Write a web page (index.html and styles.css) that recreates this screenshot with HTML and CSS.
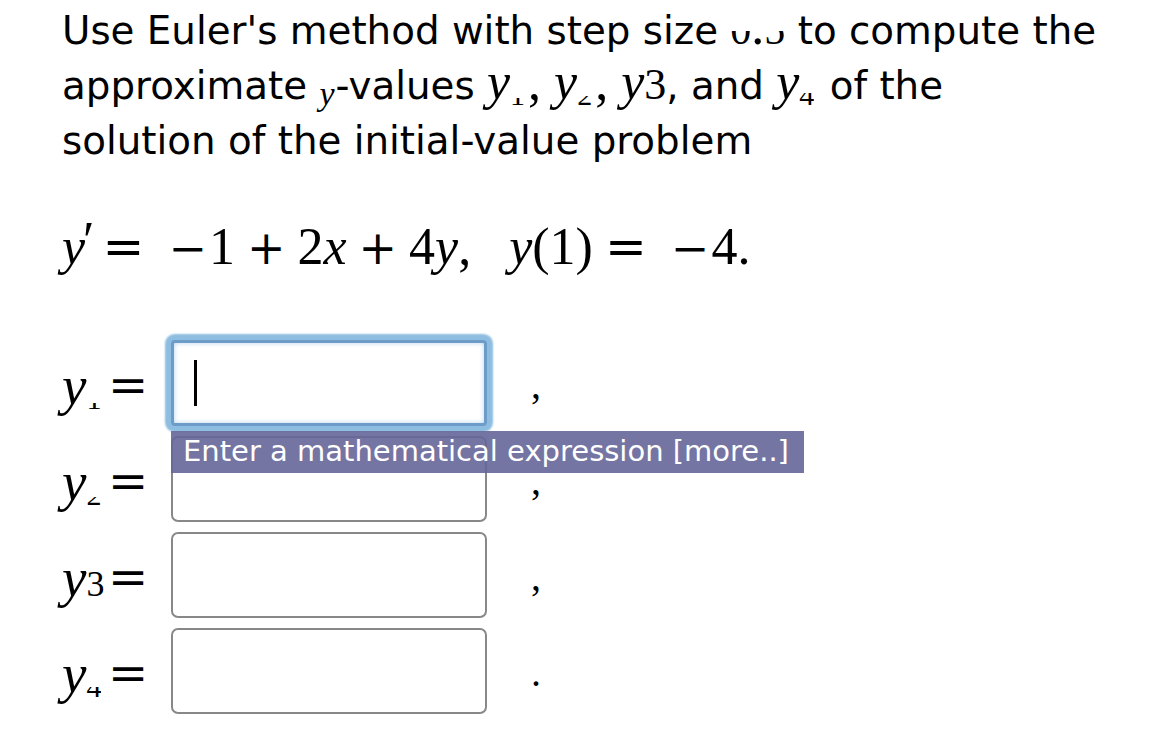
FILE: index.html
```html
<!DOCTYPE html>
<html>
<head>
<meta charset="utf-8">
<link rel="stylesheet" href="styles.css">
</head>
<body>
<div class="page">
  <p class="prompt"><span class="line">Use Euler's method with step size <span class="m"><span class="clip c-big"><span class="cin">0</span></span>.<span class="clip c-big"><span class="cin">5</span></span></span> to compute the</span><span class="line">approximate <i class="m yv">y</i>-values <span class="m"><i>y</i><span class="clip c-sub1"><span class="cin">1</span></span>, <i>y</i><span class="clip c-sub2"><span class="cin">2</span></span>, <i>y</i><span class="t3">3</span></span>, and <span class="m"><i>y</i><span class="clip c-sub4"><span class="cin">4</span></span></span> of the</span><span class="line">solution of the initial-value problem</span></p>

  <div class="eq"><i>y</i><span class="prime">′</span><span class="op eqop">=</span><span class="op un">−</span>1<span class="op">+</span>2<i>x</i><span class="op">+</span>4<i>y</i>,<span class="gap"></span><i>y</i>(1)<span class="op eqop">=</span><span class="op un">−</span>4.</div>

  <div class="answers">
    <div class="row">
      <span class="lbl"><i>y</i><span class="clip s1"><span class="cin">1</span></span></span>
      <span class="eqsign">=</span>
      <div class="box focus"><span class="caret"></span></div>
      <span class="punct">,</span>
      <div class="tip">Enter a mathematical expression [more..]</div>
    </div>
    <div class="row">
      <span class="lbl"><i>y</i><span class="clip s2"><span class="cin">2</span></span></span>
      <span class="eqsign">=</span>
      <div class="box"></div>
      <span class="punct">,</span>
    </div>
    <div class="row">
      <span class="lbl"><i>y</i><span class="three">3</span></span>
      <span class="eqsign">=</span>
      <div class="box"></div>
      <span class="punct">,</span>
    </div>
    <div class="row">
      <span class="lbl"><i>y</i><span class="clip s4"><span class="cin">4</span></span></span>
      <span class="eqsign">=</span>
      <div class="box"></div>
      <span class="punct dot">.</span>
    </div>
  </div>
</div>
</body>
</html>
```

FILE: styles.css
```css
html, body {
  margin: 0;
  padding: 0;
  background: #ffffff;
}

.page {
  position: relative;
  padding: 0 0 0 62px;
  color: #000;
}

.prompt {
  margin: 0;
  padding-top: 3px;
  font-family: "DejaVu Sans", sans-serif;
  font-size: 38.8px;
  line-height: 55px;
  white-space: nowrap;
}

.line {
  display: block;
}

.m {
  font-family: "Liberation Serif", serif;
  font-size: 52px;
  line-height: 10px;
}

.m i, .eq i, .lbl i {
  font-style: italic;
}

.t3 {
  font-size: 44px;
}

.yv {
  font-size: 34px;
  position: relative;
  top: 6px;
  margin-right: 1px;
}

.clip {
  display: inline-block;
  overflow: hidden;
  vertical-align: baseline;
  line-height: 1em;
}

.cin {
  display: block;
  line-height: 1em;
}

.c-big {
  height: 0.32em;
  font-size: 42px;
}
.c-big .cin {
  margin-top: calc(0.32em - 0.8375em);
}

.c-sub1, .c-sub2, .c-sub4 {
  font-size: 30px;
  vertical-align: -6px;
  margin-right: 3px;
}
.c-sub1 { height: 0.25em; }
.c-sub1 .cin { margin-top: calc(0.25em - 0.8375em); }
.c-sub2 { height: 0.3em; }
.c-sub2 .cin { margin-top: calc(0.3em - 0.8375em); }
.c-sub4 { height: 0.4em; }
.c-sub4 .cin { margin-top: calc(0.4em - 0.8375em); }

.eq {
  margin-top: 49px;
  font-family: "Liberation Serif", serif;
  font-size: 52px;
  line-height: 60px;
  white-space: nowrap;
}

.prime {
  font-style: normal;
  margin-left: -2px;
  margin-right: -4px;
  position: relative;
  top: -6px;
}

.op {
  font-family: "DejaVu Serif", serif;
  font-size: 46px;
  margin: 0 12px;
}

.op.eqop {
  font-size: 50px;
}

.op.un {
  margin-right: 2px;
}

.gap {
  display: inline-block;
  width: 38px;
}

.answers {
  margin-top: 62px;
  display: flex;
  flex-direction: column;
  gap: 10px;
}

.row {
  position: relative;
  display: flex;
  align-items: center;
  height: 86px;
  font-family: "Liberation Serif", serif;
  font-size: 55px;
}

.lbl {
  width: 46px;
  white-space: nowrap;
  position: relative;
  top: 2px;
}

.three {
  font-size: 36px;
}

.s1, .s2, .s4 {
  font-size: 30px;
  vertical-align: -6px;
}
.s1 { height: 0.22em; }
.s1 .cin { margin-top: calc(0.22em - 0.8375em); }
.s2 { height: 0.28em; }
.s2 .cin { margin-top: calc(0.28em - 0.8375em); }
.s4 { height: 0.36em; }
.s4 .cin { margin-top: calc(0.36em - 0.8375em); }

.eqsign {
  width: 63px;
  font-family: "DejaVu Serif", serif;
  font-size: 48px;
  position: relative;
  top: 2px;
}

.box {
  width: 316px;
  height: 86px;
  box-sizing: border-box;
  border: 2px solid #888888;
  border-radius: 7px;
  background: #fff;
  display: flex;
  align-items: center;
  padding-left: 20px;
}

.box.focus {
  border: 3px solid #6e9cc8;
  border-radius: 4px;
  box-shadow: 0 0 2px 6px #8dbde0, inset 0 0 5px #b6d4ec;
}

.caret {
  display: block;
  width: 3px;
  height: 46px;
  background: #000;
}

.punct {
  margin-left: 44px;
  font-size: 40px;
  position: relative;
  top: 1px;
}

.tip {
  position: absolute;
  left: 109px;
  top: 91px;
  width: 633px;
  height: 42px;
  box-sizing: border-box;
  padding-left: 12px;
  background: rgba(102, 102, 153, 0.9);
  color: #fff;
  font-family: "DejaVu Sans", sans-serif;
  font-size: 29px;
  line-height: 40px;
  white-space: nowrap;
  z-index: 2;
}
```
